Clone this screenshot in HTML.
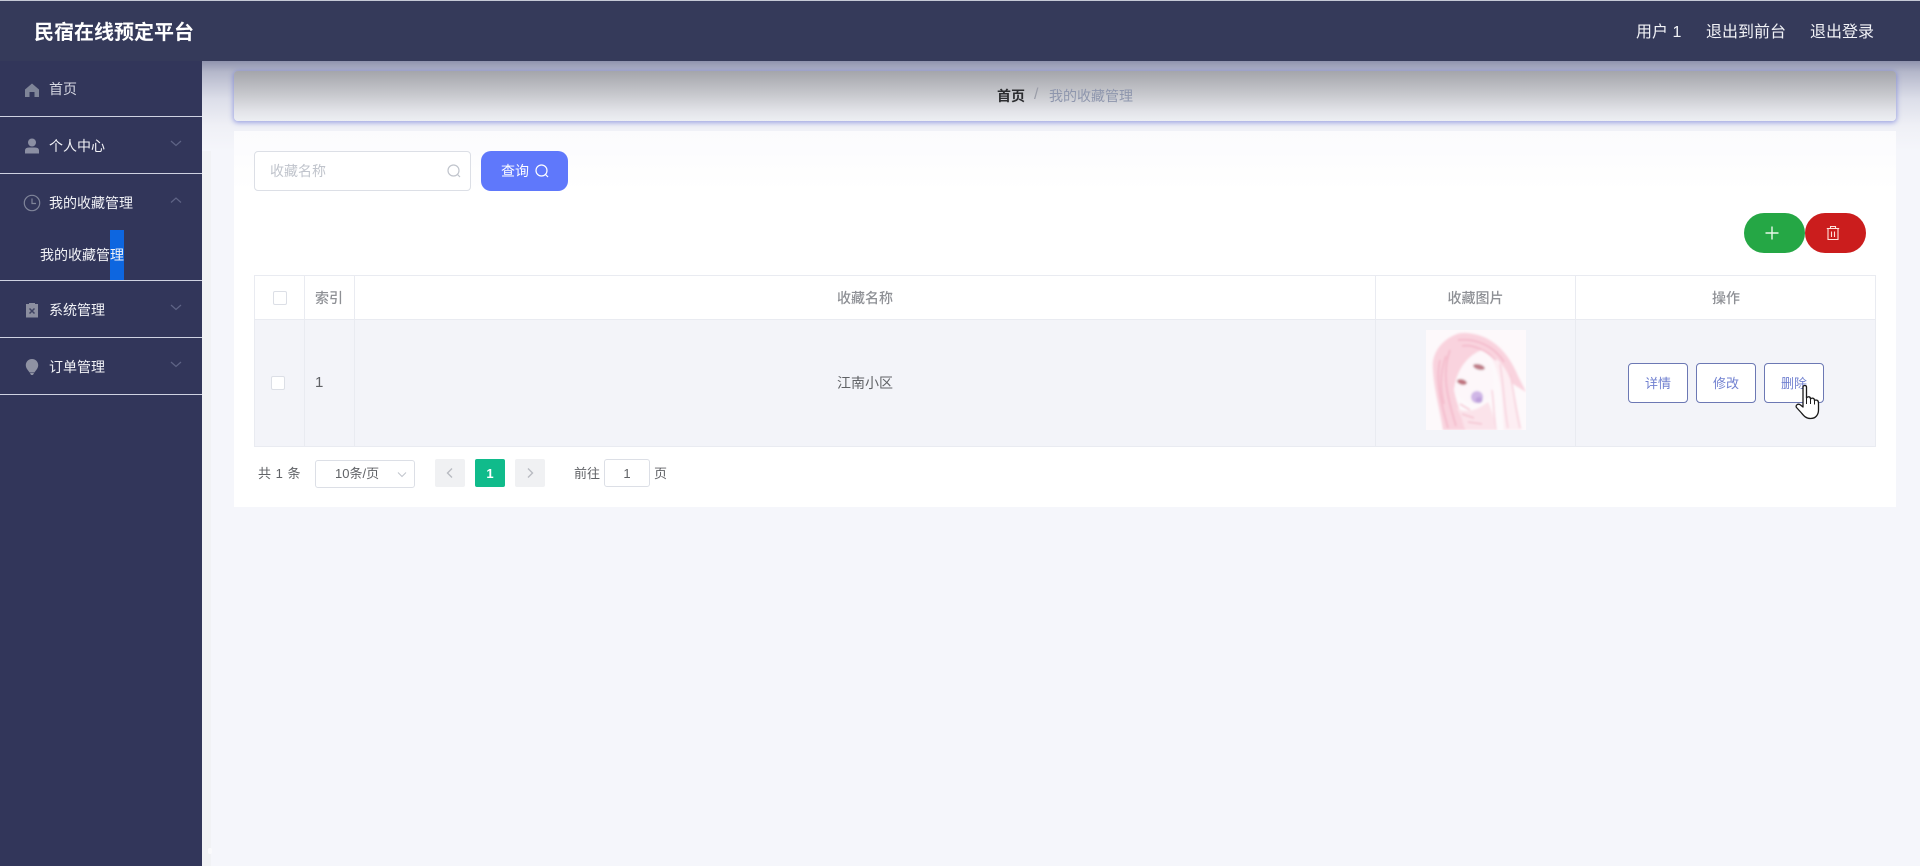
<!DOCTYPE html>
<html lang="zh">
<head>
<meta charset="utf-8">
<title>民宿在线预定平台</title>
<style>
html,body{margin:0;padding:0;width:1920px;height:866px;overflow:hidden;background:#f5f6fb;font-family:"Liberation Sans","Noto Sans CJK SC",sans-serif;}
.a{position:absolute;box-sizing:border-box;white-space:nowrap;}
.c{display:flex;align-items:center;justify-content:center;}
.side{font-size:14px;color:#f2f3f7;line-height:20px;left:49px;}
.line{left:0;width:202px;height:1px;background:#cfd2e2;}
.ic{left:23px;width:18px;height:18px;}
.ch{left:168px;width:16px;height:16px;}
.th{font-size:14px;color:#8e9095;font-weight:500;line-height:20px;}
.vl{width:1px;background:#e9ebf1;}
.op{top:363px;height:40px;width:60px;border:1px solid #6c78b4;border-radius:4px;background:#fff;color:#7080d0;font-size:13px;padding-bottom:1px;}
.pg{top:459px;width:30px;height:28px;border-radius:2px;}
</style>
</head>
<body>

<!-- content backdrop shading -->
<div class="a" style="left:202px;top:61px;width:1718px;height:90px;background:linear-gradient(180deg,#8f93ae 0,#b4b7ca 12%,#dcdee9 42%,#eff0f6 72%,#f5f6fb 100%);"></div>
<div class="a" style="left:202px;top:151px;width:9px;height:715px;background:#f1f2f5;"></div>
<div class="a" style="left:208px;top:848px;width:4px;height:6px;background:#fafafc;border-radius:2px;"></div>

<!-- header -->
<div class="a" style="left:0;top:0;width:1920px;height:61px;background:#353a5a;border-top:1px solid #c5c9d6;"></div>
<div class="a" style="left:34px;top:18px;font-size:20px;font-weight:700;color:#fff;line-height:30px;">民宿在线预定平台</div>
<div class="a" style="left:1636px;top:21px;font-size:16px;color:#f2f3f7;line-height:24px;">用户 1</div>
<div class="a" style="left:1706px;top:21px;font-size:16px;color:#f2f3f7;line-height:24px;">退出到前台</div>
<div class="a" style="left:1810px;top:21px;font-size:16px;color:#f2f3f7;line-height:24px;">退出登录</div>

<!-- sidebar -->
<div class="a" style="left:0;top:61px;width:202px;height:805px;background:#32365a;"></div>

<svg class="a ic" style="top:81px;" viewBox="0 0 18 18"><path d="M9 2.500 L16 8.500 V16 H11.500 V11 H6.500 V16 H2 V8.500 Z" fill="#7f8598"/></svg>
<div class="a side" style="top:79px;color:#d5d7e2;">首页</div>
<div class="a line" style="top:116px;"></div>

<svg class="a ic" style="top:137px;" viewBox="0 0 18 18"><circle cx="9" cy="5.500" r="4" fill="#8b8fa3"/><path d="M2 16.500 V13.500 Q2 10.500 6 10.500 H12 Q16 10.500 16 13.500 V16.500 Z" fill="#8b8fa3"/></svg>
<div class="a side" style="top:136px;">个人中心</div>
<svg class="a ch" style="top:135px;" viewBox="0 0 16 16"><path d="M3 6 L8 10.500 L13 6" fill="none" stroke="#5f6486" stroke-width="1.200"/></svg>
<div class="a line" style="top:173px;"></div>

<svg class="a ic" style="left:23px;top:194px;" viewBox="0 0 18 18"><circle cx="9" cy="9" r="7.700" fill="none" stroke="#7f8499" stroke-width="1.200"/><path d="M9 4.500 V9.500 H13" fill="none" stroke="#7f8499" stroke-width="1.200"/></svg>
<div class="a side" style="top:193px;">我的收藏管理</div>
<svg class="a ch" style="top:192px;" viewBox="0 0 16 16"><path d="M3 10.500 L8 6 L13 10.500" fill="none" stroke="#5f6486" stroke-width="1.200"/></svg>

<div class="a" style="left:110px;top:230px;width:14px;height:50px;background:#0d66e0;"></div>
<div class="a" style="left:40px;top:245px;font-size:14px;color:#f2f3f7;line-height:20px;">我的收藏管理</div>
<div class="a line" style="top:280px;"></div>

<svg class="a ic" style="top:301px;" viewBox="0 0 18 18"><path d="M3 3 H6 V2 H12 V3 H15 V16.500 H3 Z" fill="#8b8e9f"/><path d="M6.500 7.500 L11.500 12.500 M11.500 7.500 L6.500 12.500" stroke="#3f4362" stroke-width="1.500"/></svg>
<div class="a side" style="top:300px;">系统管理</div>
<svg class="a ch" style="top:299px;" viewBox="0 0 16 16"><path d="M3 6 L8 10.500 L13 6" fill="none" stroke="#5f6486" stroke-width="1.200"/></svg>
<div class="a line" style="top:337px;"></div>

<svg class="a ic" style="top:358px;" viewBox="0 0 18 18"><path d="M9 1 C12.800 1 15.200 4 15.200 7.200 C15.200 10.500 12.500 12.500 11.500 14.500 H6.500 C5.500 12.500 2.800 10.500 2.800 7.200 C2.800 4 5.200 1 9 1 Z" fill="#8f92a3"/><path d="M7 15 H11 L10 17 H8 Z" fill="#8f92a3"/></svg>
<div class="a side" style="top:357px;">订单管理</div>
<svg class="a ch" style="top:356px;" viewBox="0 0 16 16"><path d="M3 6 L8 10.500 L13 6" fill="none" stroke="#5f6486" stroke-width="1.200"/></svg>
<div class="a line" style="top:394px;"></div>

<!-- main panel -->
<div class="a" style="left:234px;top:131px;width:1662px;height:376px;background:linear-gradient(180deg,#fbfbfd 0,#fdfdfe 30px,#fff 60px);"></div>

<!-- breadcrumb -->
<div class="a" style="left:234px;top:71px;width:1662px;height:50px;border-radius:4px;background:linear-gradient(180deg,#a4a5ab 0,#c8c9ce 48%,#e2e3e8 80%,#edeff3 100%);box-shadow:0 1px 5px 1px rgba(92,104,214,.5);"></div>
<div class="a" style="left:997px;top:86px;font-size:14px;font-weight:700;color:#2c2d30;line-height:20px;">首页</div>
<div class="a" style="left:1034px;top:85px;font-size:16px;color:#9a9da8;line-height:20px;">/</div>
<div class="a" style="left:1049px;top:86px;font-size:14px;color:#8e96ad;line-height:20px;">我的收藏管理</div>

<!-- search -->
<div class="a" style="left:254px;top:151px;width:217px;height:40px;border:1px solid #dcdfe6;border-radius:4px;background:#fff;"></div>
<div class="a" style="left:270px;top:161px;font-size:14px;color:#c0c4cc;line-height:20px;">收藏名称</div>
<svg class="a" style="left:446px;top:163px;width:16px;height:16px;" viewBox="0 0 16 16"><circle cx="7.500" cy="7.500" r="5.500" fill="none" stroke="#c0c4cc" stroke-width="1.200"/><path d="M11.500 11.500 L14 14" stroke="#c0c4cc" stroke-width="1.200"/></svg>
<div class="a" style="left:481px;top:151px;width:87px;height:40px;background:#5f78fb;border-radius:10px;"></div>
<div class="a" style="left:501px;top:161px;font-size:14px;color:#fff;line-height:20px;">查询</div>
<svg class="a" style="left:534px;top:163px;width:16px;height:16px;" viewBox="0 0 16 16"><circle cx="7.500" cy="7.500" r="5.500" fill="none" stroke="#fff" stroke-width="1.200"/><path d="M11.500 11.500 L14 14" stroke="#fff" stroke-width="1.200"/></svg>

<!-- action buttons -->
<div class="a" style="left:1744px;top:213px;width:61px;height:40px;background:#25a745;border-radius:20px;"></div>
<svg class="a" style="left:1764px;top:225px;width:16px;height:16px;" viewBox="0 0 16 16"><path d="M8 1.500 V14.500 M1.500 8 H14.500" stroke="#e8f8ea" stroke-width="1.400"/></svg>
<div class="a" style="left:1805px;top:213px;width:61px;height:40px;background:#cb1d1d;border-radius:20px;"></div>
<svg class="a" style="left:1825px;top:225px;width:16px;height:16px;" viewBox="0 0 16 16"><path d="M1.800 3.500 H14.200 M5.500 3.500 V1.500 H10.500 V3.500 M3 3.500 V14.500 H13 V3.500 M6.500 6.500 V12 M9.500 6.500 V12" fill="none" stroke="#ffe3dc" stroke-width="1.100"/></svg>

<!-- table -->
<div class="a" style="left:254px;top:275px;width:1622px;height:172px;border:1px solid #e9ebf1;background:#fff;"></div>
<div class="a" style="left:255px;top:319px;width:1620px;height:127px;background:#f3f4f9;border-top:1px solid #e9ebf1;"></div>
<div class="a vl" style="left:304px;top:275px;height:172px;"></div>
<div class="a vl" style="left:354px;top:275px;height:172px;"></div>
<div class="a vl" style="left:1375px;top:275px;height:172px;"></div>
<div class="a vl" style="left:1575px;top:275px;height:172px;"></div>

<div class="a" style="left:273px;top:291px;width:14px;height:14px;border:1px solid #dcdfe6;border-radius:2px;background:#fff;"></div>
<div class="a th" style="left:315px;top:288px;">索引</div>
<div class="a th c" style="left:355px;top:288px;width:1020px;">收藏名称</div>
<div class="a th c" style="left:1376px;top:288px;width:199px;">收藏图片</div>
<div class="a th c" style="left:1576px;top:288px;width:300px;">操作</div>

<div class="a" style="left:271px;top:376px;width:14px;height:14px;border:1px solid #dcdfe6;border-radius:2px;background:#fff;"></div>
<div class="a" style="left:315px;top:373px;font-size:15px;color:#606266;line-height:20px;">1</div>
<div class="a c" style="left:355px;top:373px;width:1020px;font-size:14px;color:#606266;line-height:20px;">江南小区</div>

<!-- anime illustration thumbnail -->
<svg class="a" style="left:1426px;top:330px;width:100px;height:100px;" viewBox="0 0 100 100">
<defs><filter id="b" x="-10%" y="-10%" width="120%" height="120%"><feGaussianBlur stdDeviation="1"/></filter><clipPath id="cp"><rect width="100" height="100"/></clipPath></defs>
<rect width="100" height="100" fill="#fdf9fb"/>
<g clip-path="url(#cp)" filter="url(#b)">
<path d="M31 4 C15 10 5 24 7 40 C8 60 14 80 17 100 H40 C36 85 30 72 28 60 C30 42 40 26 56 20 C68 26 78 38 87 54 L100 62 L92 46 C84 26 70 10 52 5 C44 3 37 2 31 4 Z" fill="#f9d3de"/>
<path d="M56 20 C68 26 74 44 76 70 L78 100 H96 C92 80 88 62 84 48 C78 34 68 24 56 20 Z" fill="#fdeef3"/>
<path d="M28 60 C30 42 40 26 56 20 C66 30 70 50 66 64 C58 76 46 76 38 70 C33 67 29 64 28 60 Z" fill="#fdf7fa"/>
<path d="M14 30 C9 52 16 76 22 98 M24 20 C15 44 22 70 30 96 M20 26 C14 42 14 58 18 74 M32 10 C50 8 68 16 78 32 M36 16 C46 14 60 20 70 30" fill="none" stroke="#f3b4c6" stroke-width="1.400"/>
<path d="M84 44 C88 62 90 82 94 98 M74 34 C78 56 78 78 82 98 M66 60 C68 76 68 88 70 100" fill="none" stroke="#f6c9d6" stroke-width="1.200"/>
<path d="M30 78 C38 88 36 96 40 100 H70 C68 88 66 80 62 72 C52 80 40 84 30 78 Z" fill="#fbe3ea"/>
<path d="M34 74 L44 80 M36 84 L48 88 M42 92 L56 94" stroke="#f3bccb" stroke-width="1.200" fill="none"/>
<ellipse cx="53" cy="37" rx="6" ry="2.700" fill="#bf7d88" transform="rotate(15 53 37)"/>
<ellipse cx="36" cy="52" rx="5" ry="2.700" fill="#c0737f" transform="rotate(15 36 52)"/>
<ellipse cx="51" cy="67" rx="6" ry="6" fill="#cfb6e6"/>
<ellipse cx="53" cy="70" rx="3.500" ry="3" fill="#bda0dc"/>
</g>
</svg>

<!-- row buttons -->
<div class="a op c" style="left:1628px;">详情</div>
<div class="a op c" style="left:1696px;">修改</div>
<div class="a op c" style="left:1764px;">删除</div>

<!-- hand cursor -->
<svg class="a" style="left:1795px;top:384px;width:26px;height:36px;" viewBox="0 0 26 36">
<path d="M8 3 C8 1 11.500 1 11.500 3 V14 C13 12 15.500 12.500 15.500 15 C17 13.500 19.500 14 19.500 16.500 C21 15.500 23.500 16 23.500 19 V26 C23.500 31 20.500 34.500 15.500 34.500 C11 34.500 9 32 6.500 29 L1.500 23.500 C0 21.500 3 19 5.500 21 L8 23 Z" fill="#fff" stroke="#1a1a1a" stroke-width="1.300" stroke-linejoin="round"/>
<path d="M11.500 14 V20 M15.500 15 V20 M19.500 16.500 V20.500" stroke="#1a1a1a" stroke-width="1" fill="none"/>
</svg>

<!-- pagination -->
<div class="a" style="left:258px;top:464px;font-size:13px;color:#606266;line-height:20px;word-spacing:1px;">共 1 条</div>
<div class="a" style="left:315px;top:460px;width:100px;height:28px;border:1px solid #dcdfe6;border-radius:3px;background:#fff;"></div>
<div class="a" style="left:335px;top:464px;font-size:13px;color:#606266;line-height:20px;">10条/页</div>
<svg class="a" style="left:396px;top:468px;width:12px;height:12px;" viewBox="0 0 12 12"><path d="M2 4.500 L6 8.500 L10 4.500" fill="none" stroke="#c0c4cc" stroke-width="1"/></svg>

<div class="a pg" style="left:435px;background:#f0f1f3;"></div>
<svg class="a" style="left:444px;top:467px;width:12px;height:12px;" viewBox="0 0 12 12"><path d="M8 1.500 L3.500 6 L8 10.500" fill="none" stroke="#b8bbc2" stroke-width="1.400"/></svg>
<div class="a pg c" style="left:475px;background:#10bb8b;color:#fff;font-size:13px;font-weight:700;">1</div>
<div class="a pg" style="left:515px;background:#f0f1f3;"></div>
<svg class="a" style="left:524px;top:467px;width:12px;height:12px;" viewBox="0 0 12 12"><path d="M4 1.500 L8.500 6 L4 10.500" fill="none" stroke="#b8bbc2" stroke-width="1.400"/></svg>

<div class="a" style="left:574px;top:464px;font-size:13px;color:#606266;line-height:20px;">前往</div>
<div class="a c" style="left:604px;top:459px;width:46px;height:28px;border:1px solid #dcdfe6;border-radius:3px;background:#fff;font-size:13px;color:#606266;">1</div>
<div class="a" style="left:654px;top:464px;font-size:13px;color:#606266;line-height:20px;">页</div>

</body>
</html>
